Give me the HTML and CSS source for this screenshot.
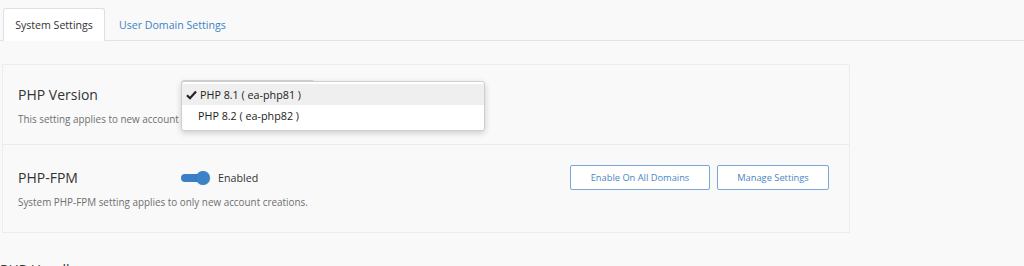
FILE: index.html
```html
<!DOCTYPE html>
<html>
<head>
<meta charset="utf-8">
<link rel="stylesheet" href="styles.css">
</head>
<body>
<div class="page">
  <div class="tabs">
    <div class="tab active">System Settings</div>
    <div class="tab link">User Domain Settings</div>
  </div>
  <div class="content">
    <div class="panel">
      <div class="row row-version">
        <div class="row-main">
          <div class="label">PHP Version</div>
          <div class="control">
            <div class="select-wrap">
              <div class="select"></div>
              <div class="menu">
                <div class="opt selected"><svg class="check" width="11" height="10" viewBox="0 0 11 10"><path d="M1 5.2 L4 8.2 L10 1.6" fill="none" stroke="#222" stroke-width="2.2" stroke-linejoin="miter"/></svg>PHP 8.1 ( ea-php81 )</div>
                <div class="opt">PHP 8.2 ( ea-php82 )</div>
              </div>
            </div>
          </div>
        </div>
        <div class="desc">This setting applies to new account creations.</div>
      </div>
      <div class="row row-fpm">
        <div class="row-main">
          <div class="label">PHP-FPM</div>
          <div class="control toggle-ctl">
            <span class="toggle"><span class="knob"></span></span>
            <span class="toggle-text">Enabled</span>
          </div>
          <div class="actions">
            <button class="btn btn-wide">Enable On All Domains</button>
            <button class="btn btn-narrow">Manage Settings</button>
          </div>
        </div>
        <div class="desc">System PHP-FPM setting applies to only new account creations.</div>
      </div>
    </div>
    <h2 class="section">PHP Handlers</h2>
  </div>
</div>
</body>
</html>
```
FILE: styles.css
```css
* { box-sizing: border-box; }
html, body { margin: 0; padding: 0; }
body {
  background: #f9f9f9;
  font-family: "Open Sans", "Liberation Sans", sans-serif;
  color: #333;
  width: 1024px;
  height: 266px;
  overflow: hidden;
}
.tabs {
  display: flex;
  padding: 8px 0 0 3px;
  border-bottom: 1px solid #e3e3e3;
  height: 41px;
}
.tab {
  height: 33px;
  display: flex;
  align-items: center;
  font-size: 10.6px;
  white-space: nowrap;
}
.tab.active {
  background: #fff;
  border: 1px solid #e0e0e0;
  border-bottom: 1px solid #fff;
  border-radius: 3px 3px 0 0;
  color: #333;
  width: 102px;
  justify-content: center;
  margin-bottom: -1px;
}
.tab.link {
  color: #3b82c4;
  padding-left: 14px;
}
.content {
  padding: 23px 0 0 2px;
}
.panel {
  width: 848px;
  border: 1px solid #ededed;
  background: #f9f9f9;
}
.row {
  padding: 0 0 0 15px;
}
.row-version {
  height: 80px;
  border-bottom: 1px solid #ececec;
  padding-top: 15px;
}
.row-fpm {
  height: 87px;
  padding-top: 20px;
}
.row-main {
  display: flex;
  align-items: center;
}
.row-version .row-main { align-items: flex-start; }
.label {
  width: 163px;
  font-size: 14px;
  color: #333;
  line-height: 20px;
}
.row-version .label { margin-top: 5px; }
.desc {
  font-size: 9.9px;
  line-height: 15px;
  color: #6f6f6f;
  margin-top: 5px;
}
.row-version .desc { margin-top: 7px; }
.select-wrap {
  position: relative;
  width: 134px;
  height: 22px;
}
.select {
  width: 134px;
  height: 22px;
  border: 1px solid #d5d5d5;
  border-radius: 3px;
  background: #fff;
}
.menu {
  position: absolute;
  left: 0;
  top: 1px;
  width: 304px;
  background: #fff;
  border: 1px solid #cfcfcf;
  border-radius: 3px;
  box-shadow: 0 2px 6px rgba(0,0,0,0.18);
  padding: 2px 0 4px;
  z-index: 5;
}
.opt {
  height: 21px;
  display: flex;
  align-items: center;
  padding-left: 16px;
  font-size: 10.75px;
  color: #222;
}
.opt.selected {
  background: #efefef;
  padding-left: 4px;
}
.check {
  margin-right: 3px;
  flex: none;
}
.toggle-ctl {
  display: flex;
  align-items: center;
  width: 389px;
}
.toggle {
  position: relative;
  width: 29px;
  height: 14px;
  display: inline-block;
}
.toggle::before {
  content: "";
  position: absolute;
  left: 0;
  top: 3px;
  width: 24px;
  height: 8px;
  border-radius: 4px;
  background: #3a7fc6;
}
.knob {
  position: absolute;
  right: 0;
  top: 0;
  width: 14px;
  height: 14px;
  border-radius: 50%;
  background: #3b82c8;
  box-shadow: 0 0 1px rgba(0,0,0,0.3);
}
.toggle-text {
  margin-left: 8px;
  font-size: 10.7px;
  color: #333;
}
.actions {
  display: flex;
  gap: 7px;
}
.btn {
  height: 25px;
  border: 1px solid #79a7d9;
  border-radius: 2px;
  background: #fff;
  color: #4a86c4;
  font-family: "Open Sans", "Liberation Sans", sans-serif;
  font-size: 9.3px;
  padding: 0;
}
.btn-wide { width: 140px; }
.btn-narrow { width: 112px; }
.section {
  margin: 27px 0 0 -2px;
  font-size: 14px;
  line-height: 20px;
  font-weight: normal;
  color: #333;
}
```
